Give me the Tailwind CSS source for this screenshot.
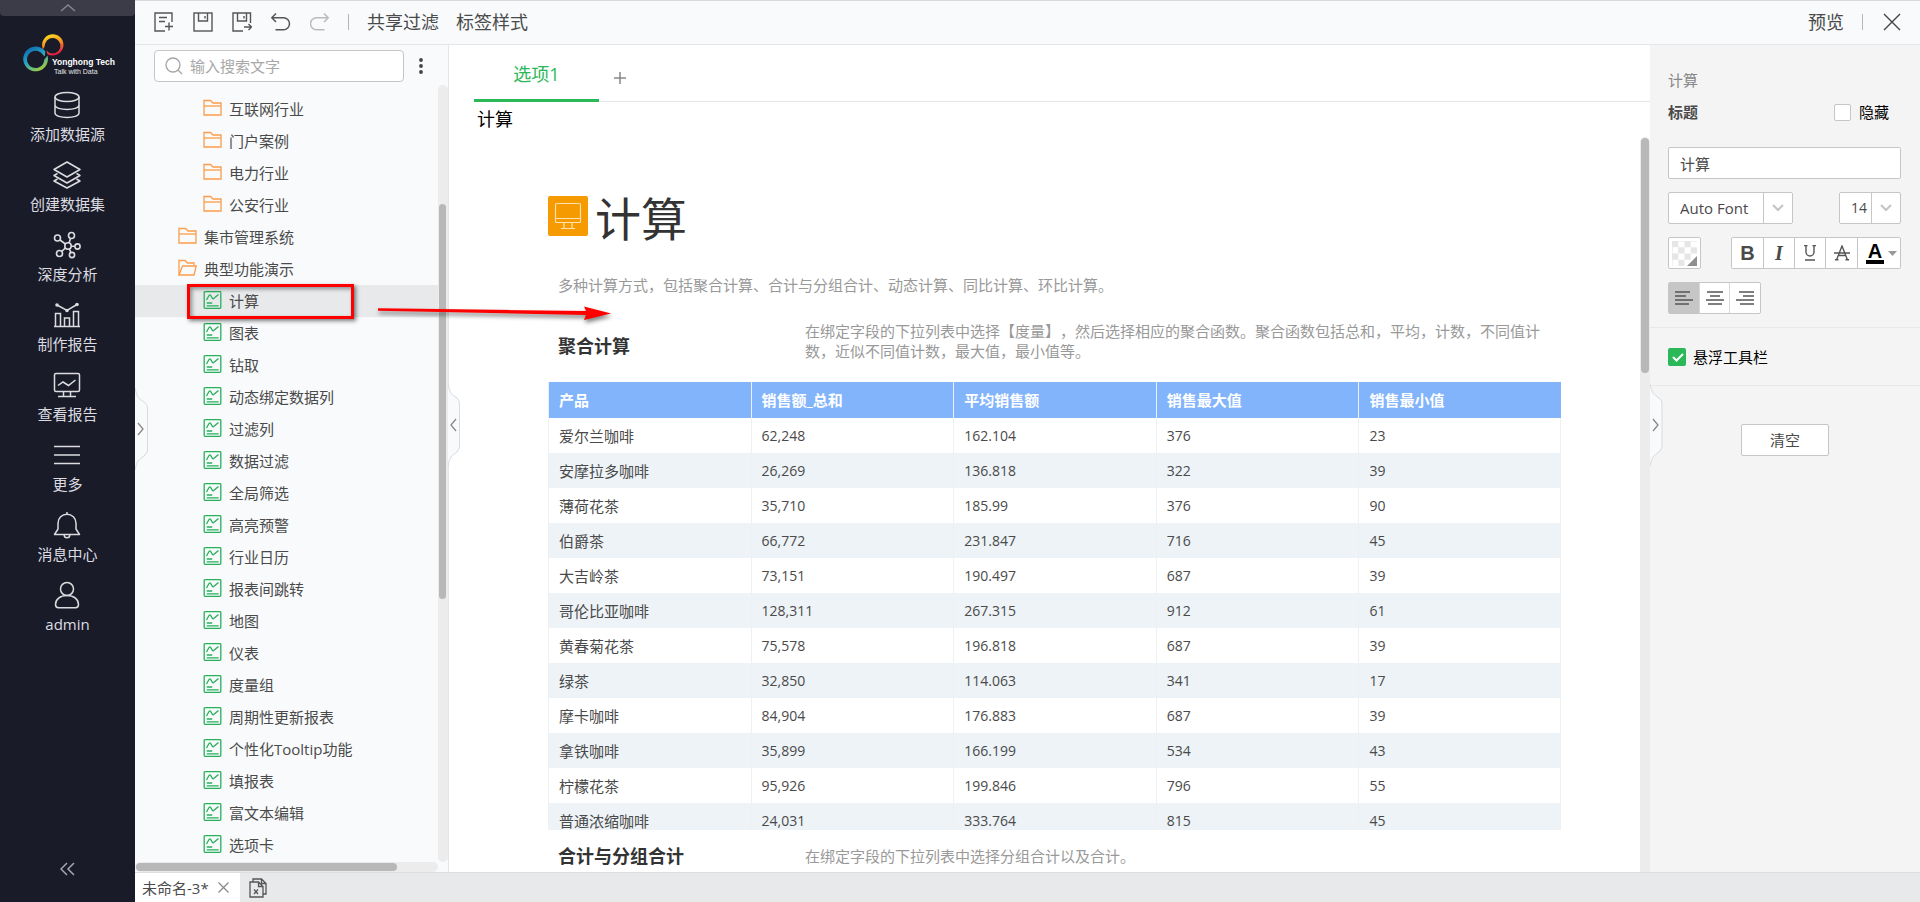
<!DOCTYPE html>
<html lang="zh-CN">
<head>
<meta charset="utf-8">
<meta name="viewport" content="width=device-width, initial-scale=1">
<title>Yonghong Tech</title>
<script src="https://cdn.jsdelivr.net/npm/@tailwindcss/browser@4"></script>
</head>
<body class="h-screen overflow-hidden bg-white font-['Open_Sans','Noto_Sans_CJK_SC',sans-serif] text-[15px] leading-5 text-[#4a4a4a] [text-spacing-trim:space-all]">
<svg class="hidden" aria-hidden="true">
  <symbol id="folder" viewBox="0 0 19 17" fill="none" stroke="#fb9d4a" stroke-width="1.3"><path d="M1 1h6.5l2.5 2.5h8V15.500H1z"/><path d="M1 6.500h17"/></symbol>
  <symbol id="folder-open" viewBox="0 0 19 17" fill="none" stroke="#fb9d4a" stroke-width="1.3"><path d="M1 15.500V1h6l2.500 2.500h6.500V6"/><path d="M1 15.500L4.500 6.500H18.200L16 15.500z"/></symbol>
  <symbol id="report" viewBox="0 0 18 18" fill="none" stroke="#27b05c" stroke-width="1.3"><rect x=".7" y=".7" width="16.600" height="16.600" rx=".8"/><path d="M3 9l2.500-4.500q.8-1.200 1.700 0l1.600 2.700q.8 1.200 1.700 0L15 3.500M3.200 12h5.500M3.200 14.800h12"/></symbol>
  <symbol id="chev" viewBox="0 0 12 8" fill="none" stroke="#c4c4c4" stroke-width="2"><path d="M1 1l5 5 5-5"/></symbol>
</svg>

<div class="flex h-full">
  <nav class="flex w-[135px] shrink-0 flex-col items-center bg-[#1a1b29] text-[#dcdce0]">
    <button aria-label="收起" class="flex h-4 w-full items-center justify-center rounded-b-sm bg-[#3b3c48]">
      <svg class="h-2 w-4" viewBox="0 0 16 8" fill="none" stroke="#85868f" stroke-width="1.500"><path d="M1 7l7-6 7 6"/></svg>
    </button>
    <svg class="mt-4 h-[44px] w-[94px]" viewBox="21 32 94 44" role="img" aria-label="Yonghong Tech">
      <defs>
        <linearGradient id="warm" x1=".2" y1="0" x2=".5" y2="1"><stop offset="0" stop-color="#fbe122"/><stop offset=".5" stop-color="#f3901e"/><stop offset="1" stop-color="#e3124b"/></linearGradient>
        <linearGradient id="cool" x1=".1" y1="0" x2=".7" y2="1"><stop offset="0" stop-color="#0a5fae"/><stop offset=".5" stop-color="#27a3c4"/><stop offset="1" stop-color="#a8cf38"/></linearGradient>
      </defs>
      <path fill="url(#warm)" fill-rule="evenodd" d="M42.200 46.500A10.700 10.700 0 1 1 47.500 54.200L46.500 50.500A7.800 7.800 0 1 0 45.200 43.500Q45 46.500 42.800 49.500z"/>
      <path fill="url(#cool)" fill-rule="evenodd" d="M45.300 51.200A12.400 12.400 0 1 0 48 59.500Q48 57 47.500 55.500Q46 57.500 44.200 59.800A8.600 8.600 0 1 1 42.500 54.300L44.800 56.500z"/>
      <text x="52" y="64.500" fill="#fff" font-size="8.500" font-weight="700" font-family="Liberation Sans, sans-serif">Yonghong Tech</text>
      <text x="54" y="73.500" fill="#e6e6e6" font-size="7" font-family="Liberation Sans, sans-serif">Talk with Data</text>
    </svg>
    <div class="mt-[15px] flex flex-col items-center gap-[17px]">
      <a href="#" class="flex flex-col items-center gap-[5px]"><svg class="size-7" viewBox="0 0 28 28" fill="none" stroke="currentColor" stroke-width="1.500"><ellipse cx="14" cy="6" rx="12" ry="4.500"/><path d="M2 6v16c0 6 24 6 24 0V6M2 14c0 6 24 6 24 0"/></svg>添加数据源</a>
      <a href="#" class="flex flex-col items-center gap-[5px]"><svg class="size-7" viewBox="0 0 28 28" fill="none" stroke="currentColor" stroke-width="1.500" stroke-linejoin="round"><path d="M14 1l13 7.500L14 16 1 8.500z"/><path d="M4.500 12.500L1 14.500 14 22l13-7.500-3.500-2M4.500 18L1 20l13 7 13-7-3.500-2"/></svg>创建数据集</a>
      <a href="#" class="flex flex-col items-center gap-[5px]"><svg class="size-7" viewBox="0 0 28 28" fill="none" stroke="currentColor" stroke-width="1.600"><circle cx="15" cy="15" r="3.200"/><circle cx="4.500" cy="7" r="3"/><circle cx="18.500" cy="4.500" r="3"/><circle cx="24.500" cy="15.500" r="2.600"/><circle cx="6.500" cy="22.500" r="3"/><circle cx="19" cy="24" r="2.600"/><path d="M7 9l5.400 4M17.500 7.300l-1.400 4.600M18.200 15.200h3.700M12.400 17l-3.600 3.400M16.300 18l1.700 3.600"/></svg>深度分析</a>
      <a href="#" class="flex flex-col items-center gap-[5px]"><svg class="size-7" viewBox="0 0 28 28" fill="none" stroke="currentColor" stroke-width="1.500"><path d="M1 25.500h26M2.500 25V12.500h5V25M11.500 25v-8h5v8M20.500 25V10.500h5V25M4 4l10 5.500 10-6"/><g fill="currentColor" stroke="none"><circle cx="4" cy="4" r="1.800"/><circle cx="14" cy="9.500" r="1.800"/><circle cx="24" cy="3.500" r="1.800"/></g></svg>制作报告</a>
      <a href="#" class="flex flex-col items-center gap-[5px]"><svg class="size-7" viewBox="0 0 28 28" fill="none" stroke="currentColor" stroke-width="1.500"><rect x="1.500" y="2.500" width="25" height="18" rx="1.500"/><path d="M5 14.500l5-3.500 5.500 3.500 7-5.500M10.500 21v4M17.500 21v4M5 25.500h18"/></svg>查看报告</a>
      <a href="#" class="flex flex-col items-center gap-[5px]"><svg class="size-7" viewBox="0 0 28 28" fill="none" stroke="currentColor" stroke-width="1.600"><path d="M1 5.500h26M1 14h26M1 22.500h26"/></svg>更多</a>
      <a href="#" class="flex flex-col items-center gap-[5px]"><svg class="size-7" viewBox="0 0 28 28" fill="none" stroke="currentColor" stroke-width="1.500" stroke-linejoin="round"><path d="M14 3.200c-5 0-9 4-9 9V18l-3.500 5.500h25L23 18v-5.800c0-5-4-9-9-9zM14 3.200V1M11.200 24a2.800 2.800 0 0 0 5.600 0"/></svg>消息中心</a>
      <a href="#" class="flex flex-col items-center gap-[5px]"><svg class="size-7" viewBox="0 0 28 28" fill="none" stroke="currentColor" stroke-width="1.500"><circle cx="14" cy="8" r="6.500"/><path d="M14 14.500c-7 0-11.500 4-11.500 9 0 2 1 3.200 3 3.200h17c2 0 3-1.200 3-3.200 0-5-4.500-9-11.500-9z"/></svg>admin</a>
    </div>
    <button aria-label="折叠菜单" class="mt-auto mb-[26px]"><svg class="h-[14px] w-[15px]" viewBox="0 0 15 14" fill="none" stroke="#a5a6ae" stroke-width="1.500"><path d="M7 1L1 7l6 6M14 1L8 7l6 6"/></svg></button>
  </nav>

  <div class="relative flex min-w-0 flex-1 flex-col">
    <header class="flex h-[45px] shrink-0 items-center border-t border-b border-t-[#d8dbde] border-b-[#e3e7eb] bg-[#f8fafc] pr-[19px] pb-px pl-[19px] text-lg">
      <div class="flex gap-[19px]">
        <button aria-label="新建"><svg class="size-5" viewBox="0 0 20 20" fill="none" stroke="#555" stroke-width="1.400"><path d="M18 10V1H1v18h10M5 5.500h8M5 9.500h6M11 14.500h8M15 10.500v8"/></svg></button>
        <button aria-label="保存"><svg class="size-5" viewBox="0 0 20 20" fill="none" stroke="#555" stroke-width="1.400"><rect x="1" y="1" width="18" height="18"/><path d="M5.500 1v8h9V1M12 4v2.500"/></svg></button>
        <button aria-label="另存为"><svg class="size-5" viewBox="0 0 20 20" fill="none" stroke="#555" stroke-width="1.400"><path d="M18.500 11V1H1v18h10M5.500 1v8h9V1M12 4v2.500M12 15h7M16.500 12l3 3-3 3"/></svg></button>
        <button aria-label="撤销"><svg class="size-5" viewBox="0 0 20 20" fill="none" stroke="#555" stroke-width="1.500"><path d="M5 1.500L.8 5.700 5 10M.8 5.700H12.500a6 6 0 0 1 0 12H4.500"/></svg></button>
        <button aria-label="重做"><svg class="size-5" viewBox="0 0 20 20" fill="none" stroke="#bbb" stroke-width="1.500"><path d="M14 1.500L18.200 5.700 14 10M18.200 5.700H6.500a6 6 0 0 0 0 12h8"/></svg></button>
      </div>
      <span class="mx-[18px] h-4 w-px bg-[#b5b5b5]"></span>
      <button class="mr-[17px]">共享过滤</button>
      <button>标签样式</button>
      <button class="ml-auto">预览</button>
      <span class="mx-[18px] h-4 w-px bg-[#b5b5b5]"></span>
      <button aria-label="关闭"><svg class="ml-[2px] size-[18px]" viewBox="0 0 18 18" stroke="#444" stroke-width="1.400"><path d="M1 1l16 16M17 1L1 17"/></svg></button>
    </header>

    <div class="flex min-h-0 flex-1">
      <aside class="relative flex w-[314px] shrink-0 flex-col border-r border-[#e3e7ec] bg-[#f8fafc]">
        <div class="flex h-10 shrink-0 items-start pt-[5px] pl-[19px]">
          <label class="flex h-8 w-[250px] items-center gap-[7px] rounded-sm border border-[#c6c6c6] bg-white pl-[10px]">
            <svg class="size-[18px] shrink-0" viewBox="0 0 18 18" fill="none" stroke="#a5a5a5" stroke-width="1.300"><circle cx="8" cy="8" r="7"/><path d="M13 13l4 4"/></svg>
            <input type="text" aria-label="搜索" placeholder="输入搜索文字" class="w-full min-w-0 outline-none placeholder:text-[#a8a8a8]">
          </label>
          <button aria-label="更多选项" class="ml-[13px] flex h-8 w-2 items-center justify-center"><svg class="h-4 w-1" viewBox="0 0 4 16" fill="#444"><circle cx="2" cy="2" r="1.900"/><circle cx="2" cy="8" r="1.900"/><circle cx="2" cy="14" r="1.900"/></svg></button>
        </div>
        <div class="flex min-h-0 flex-1">
          <ul class="min-w-0 flex-1 overflow-hidden pt-2 [&_a]:flex [&_a]:h-8 [&_a]:items-center [&_a]:gap-[7px] [&_svg]:-mt-[3px] [&_svg]:w-[19px] [&_svg]:h-[18px]">
            <li><a href="#" class="pl-[68px]"><svg><use href="#folder"/></svg>互联网行业</a></li>
            <li><a href="#" class="pl-[68px]"><svg><use href="#folder"/></svg>门户案例</a></li>
            <li><a href="#" class="pl-[68px]"><svg><use href="#folder"/></svg>电力行业</a></li>
            <li><a href="#" class="pl-[68px]"><svg><use href="#folder"/></svg>公安行业</a></li>
            <li><a href="#" class="pl-[43px]"><svg><use href="#folder"/></svg>集市管理系统</a></li>
            <li><a href="#" class="pl-[43px]"><svg><use href="#folder-open"/></svg>典型功能演示</a></li>
            <li><a href="#" class="bg-[#e7e9ea] pl-[68px]"><svg><use href="#report"/></svg>计算</a></li>
            <li><a href="#" class="pl-[68px]"><svg><use href="#report"/></svg>图表</a></li>
            <li><a href="#" class="pl-[68px]"><svg><use href="#report"/></svg>钻取</a></li>
            <li><a href="#" class="pl-[68px]"><svg><use href="#report"/></svg>动态绑定数据列</a></li>
            <li><a href="#" class="pl-[68px]"><svg><use href="#report"/></svg>过滤列</a></li>
            <li><a href="#" class="pl-[68px]"><svg><use href="#report"/></svg>数据过滤</a></li>
            <li><a href="#" class="pl-[68px]"><svg><use href="#report"/></svg>全局筛选</a></li>
            <li><a href="#" class="pl-[68px]"><svg><use href="#report"/></svg>高亮预警</a></li>
            <li><a href="#" class="pl-[68px]"><svg><use href="#report"/></svg>行业日历</a></li>
            <li><a href="#" class="pl-[68px]"><svg><use href="#report"/></svg>报表间跳转</a></li>
            <li><a href="#" class="pl-[68px]"><svg><use href="#report"/></svg>地图</a></li>
            <li><a href="#" class="pl-[68px]"><svg><use href="#report"/></svg>仪表</a></li>
            <li><a href="#" class="pl-[68px]"><svg><use href="#report"/></svg>度量组</a></li>
            <li><a href="#" class="pl-[68px]"><svg><use href="#report"/></svg>周期性更新报表</a></li>
            <li><a href="#" class="pl-[68px]"><svg><use href="#report"/></svg>个性化Tooltip功能</a></li>
            <li><a href="#" class="pl-[68px]"><svg><use href="#report"/></svg>填报表</a></li>
            <li><a href="#" class="pl-[68px]"><svg><use href="#report"/></svg>富文本编辑</a></li>
            <li><a href="#" class="pl-[68px]"><svg><use href="#report"/></svg>选项卡</a></li>
          </ul>
          <div class="w-[10px] rounded-full bg-[#ececec] pt-[119px] pl-px"><div class="h-[395px] w-[7px] rounded-full bg-[#b8b8b8]"></div></div>
        </div>
        <div class="mr-[10px] h-[10px] shrink-0 rounded-full bg-[#ececec] pt-px pl-px"><div class="h-2 w-[261px] rounded-full bg-[#b8b8b8]"></div></div>

        <button aria-label="展开菜单" class="absolute top-[342px] left-0"><svg class="h-[84px] w-[14px]" viewBox="0 0 14 84" fill="none"><path d="M0 1C2 10 3 11 9 15Q12.500 17 12.500 21V63Q12.500 66 9 69C3 73 2 74 0 83" fill="#f8fafc" stroke="#d5dbe1"/><path d="M3 36l5 6-5 6" stroke="#888" stroke-width="1.300"/></svg></button>
        <button aria-label="折叠目录" class="absolute top-[338px] left-[313px] z-10"><svg class="h-[84px] w-[14px]" viewBox="0 0 14 84" fill="none"><path d="M0 1C2 10 3 11 9 15Q11.500 17 11.500 21V63Q11.500 66 9 69C3 73 2 74 0 83" fill="#f8fafc" stroke="#d5dbe1"/><path d="M8 36l-5 6 5 6" stroke="#888" stroke-width="1.300"/></svg></button>
      </aside>

      <main class="flex min-w-0 flex-1 flex-col">
        <div class="ml-[25px] flex h-[57px] shrink-0 items-stretch border-b border-[#e5e7e9]">
          <button class="-mb-px w-[125px] border-b-3 border-[#2bb858] pt-1 text-center text-lg text-[#2bb858]">选项1</button>
          <button aria-label="新增标签" class="ml-[15px] pt-[9px]"><svg class="size-3" viewBox="0 0 12 12" stroke="#888" stroke-width="1.500"><path d="M6 0v12M0 6h12"/></svg></button>
        </div>
        <div class="flex h-[35px] shrink-0 items-center pb-[2px] pl-7 text-lg text-black">计算</div>
        <div class="flex min-h-0 flex-1">
          <section class="min-w-0 flex-1 overflow-hidden pt-[59px] pr-[79px] pl-[99px]">
            <div class="flex h-10 items-center gap-[7px]">
              <svg class="size-10 shrink-0" viewBox="0 0 40 40" fill="none" stroke="#ffe2ae" stroke-width="1.200"><rect width="40" height="40" rx="2" fill="#f59a00" stroke="none"/><rect x="7.500" y="7.500" width="25" height="19" rx="1"/><path d="M7.500 22.500h25M16 27v5M24 27v5M13 32.500h14"/></svg>
              <h1 class="pt-1 text-[46px] leading-10 text-[#333]">计算</h1>
            </div>
            <p class="mt-[39px] pl-[10px] text-[#999]">多种计算方式，包括聚合计算、合计与分组合计、动态计算、同比计算、环比计算。</p>
            <div class="mt-[26px] flex items-center pr-[11px] pl-[10px]">
              <h2 class="w-[247px] shrink-0 pt-[10px] text-lg leading-5 font-bold text-[#333]">聚合计算</h2>
              <p class="text-[#999]">在绑定字段的下拉列表中选择【度量】，然后选择相应的聚合函数。聚合函数包括总和，平均，计数，不同值计数，近似不同值计数，最大值，最小值等。</p>
            </div>
            <div class="mt-[21px] h-[448px] overflow-hidden">
              <table class="w-full table-fixed border-separate border-spacing-0 text-left [&_th]:h-9 [&_th]:border-l [&_th]:border-[#e9f1fb] [&_th]:pl-[10px] [&_td]:h-[35px] [&_td]:border-l [&_td]:border-[#eef0f2] [&_td]:pl-[10px] [&_td:last-child]:border-r [&_tbody_tr:nth-child(even)]:bg-[#edf3f7] [&_td:not(:first-child)]:text-sm">
                <thead><tr class="bg-[#82b4fb] font-bold text-white"><th>产品</th><th>销售额_总和</th><th>平均销售额</th><th>销售最大值</th><th>销售最小值</th></tr></thead>
                <tbody>
                  <tr><td>爱尔兰咖啡</td><td>62,248</td><td>162.104</td><td>376</td><td>23</td></tr>
                  <tr><td>安摩拉多咖啡</td><td>26,269</td><td>136.818</td><td>322</td><td>39</td></tr>
                  <tr><td>薄荷花茶</td><td>35,710</td><td>185.99</td><td>376</td><td>90</td></tr>
                  <tr><td>伯爵茶</td><td>66,772</td><td>231.847</td><td>716</td><td>45</td></tr>
                  <tr><td>大吉岭茶</td><td>73,151</td><td>190.497</td><td>687</td><td>39</td></tr>
                  <tr><td>哥伦比亚咖啡</td><td>128,311</td><td>267.315</td><td>912</td><td>61</td></tr>
                  <tr><td>黄春菊花茶</td><td>75,578</td><td>196.818</td><td>687</td><td>39</td></tr>
                  <tr><td>绿茶</td><td>32,850</td><td>114.063</td><td>341</td><td>17</td></tr>
                  <tr><td>摩卡咖啡</td><td>84,904</td><td>176.883</td><td>687</td><td>39</td></tr>
                  <tr><td>拿铁咖啡</td><td>35,899</td><td>166.199</td><td>534</td><td>43</td></tr>
                  <tr><td>柠檬花茶</td><td>95,926</td><td>199.846</td><td>796</td><td>55</td></tr>
                  <tr><td>普通浓缩咖啡</td><td>24,031</td><td>333.764</td><td>815</td><td>45</td></tr>
                </tbody>
              </table>
            </div>
            <div class="mt-4 flex items-center pl-[10px]">
              <h2 class="w-[247px] shrink-0 text-lg leading-5 font-bold text-[#333]">合计与分组合计</h2>
              <p class="text-[#999]">在绑定字段的下拉列表中选择分组合计以及合计。</p>
            </div>
          </section>
          <div class="w-[10px] rounded-t-full bg-[#ececec] pt-px pl-px"><div class="h-[235px] w-2 rounded-full bg-[#b8b8b8]"></div></div>
        </div>
      </main>

      <aside class="relative w-[270px] shrink-0 bg-[#f4f4f4]">
        <div class="flex flex-col border-b border-[#e6e8ea] pt-[25px] pr-[19px] pb-[13px] pl-[18px]">
          <div class="text-[#888]">计算</div>
          <div class="mt-3 flex h-5 items-center justify-between">
            <span class="font-bold">标题</span>
            <label class="flex items-center gap-2 pr-3 text-black"><input type="checkbox" class="size-[17px] appearance-none rounded-xs border border-[#c6c6c6] bg-white">隐藏</label>
          </div>
          <input type="text" aria-label="标题" value="计算" class="mt-[25px] h-8 w-full rounded-xs border border-[#c6c6c6] bg-white px-[11px]">
          <div class="mt-[13px] flex justify-between">
            <div class="relative w-[125px]">
              <select aria-label="字体" class="h-8 w-full appearance-none rounded-xs border border-[#c6c6c6] bg-white pl-[11px]"><option>Auto Font</option></select>
              <span class="pointer-events-none absolute top-px right-px flex h-[30px] w-[29px] items-center justify-center border-l border-[#c6c6c6]"><svg class="h-2 w-3"><use href="#chev"/></svg></span>
            </div>
            <div class="relative w-[62px]">
              <select aria-label="字号" class="h-8 w-full appearance-none rounded-xs border border-[#c6c6c6] bg-white pl-[11px] text-sm"><option>14</option></select>
              <span class="pointer-events-none absolute top-px right-px flex h-[30px] w-[29px] items-center justify-center border-l border-[#c6c6c6]"><svg class="h-2 w-3"><use href="#chev"/></svg></span>
            </div>
          </div>
          <div class="mt-[13px] flex justify-between">
            <button aria-label="背景色" class="flex h-8 w-[33px] items-center justify-center rounded-xs border border-[#c6c6c6] bg-white">
              <svg class="size-[25px]" viewBox="0 0 25 25"><path fill="#e6e6e6" d="M0 0h6.250v6.250H0zM12.500 0h6.250v6.250H12.500zM6.250 6.250h6.250v6.250H6.250zM18.750 6.250H25v6.250h-6.250zM0 12.500h6.250v6.250H0zM12.500 12.500h6.250v6.250H12.500zM6.250 18.750h6.250V25H6.250zM0 0h25v.6H0zM0 0h.6v25H0z"/><path fill="#8f8f8f" d="M25 15v10H15z"/></svg>
            </button>
            <div class="flex h-8 divide-x divide-[#c6c6c6] rounded-xs border border-[#c6c6c6] bg-white font-['Liberation_Sans','Noto_Sans_CJK_SC',sans-serif] text-xl">
              <button aria-label="粗体" class="w-8 font-bold">B</button>
              <button aria-label="斜体" class="w-[31px] font-['Liberation_Serif',serif] font-bold italic">I</button>
              <button aria-label="下划线" class="flex w-[31px] items-center justify-center"><svg class="h-4 w-3" viewBox="0 0 12 16" fill="none" stroke="#555" stroke-width="1.400"><path d="M2 0v7a4 4 0 0 0 8 0V0M0 .5h3.500M8.500 .5H12M1 15h10"/></svg></button>
              <button aria-label="删除线" class="flex w-8 items-center justify-center"><svg class="size-4" viewBox="0 0 16 16" fill="none" stroke="#555" stroke-width="1.400"><path d="M2.500 15L8 1l5.500 14M5 10.500h6M1 14.800h3.500M11.500 14.800H15M0 8h16"/></svg></button>
              <button aria-label="字体颜色" class="flex w-[42px] items-center justify-center gap-1 pl-[5px] text-black"><span class="w-[18px] border-b-4 border-black leading-[18px] font-bold">A</span><svg class="h-[5px] w-[9px]" viewBox="0 0 9 5" fill="#999"><path d="M0 0h9L4.500 5z"/></svg></button>
            </div>
          </div>
          <div class="mt-[13px] flex h-8 w-[93px] divide-x divide-[#d8d8d8] rounded-xs border border-[#c6c6c6] bg-white">
            <button aria-label="左对齐" class="flex flex-1 items-center justify-center bg-[#c6c6c6]"><svg class="h-[14px] w-[18px]" viewBox="0 0 18 14" stroke="#555" stroke-width="1.300"><path d="M0 1h15M0 5h11M0 9h18M0 13h14"/></svg></button>
            <button aria-label="居中对齐" class="flex flex-1 items-center justify-center"><svg class="h-[14px] w-[18px]" viewBox="0 0 18 14" stroke="#555" stroke-width="1.300"><path d="M1 1h16M4 5h10M0 9h18M2 13h14"/></svg></button>
            <button aria-label="右对齐" class="flex flex-1 items-center justify-center"><svg class="h-[14px] w-[18px]" viewBox="0 0 18 14" stroke="#555" stroke-width="1.300"><path d="M3 1h15M7 5h11M0 9h18M4 13h14"/></svg></button>
          </div>
        </div>
        <div class="flex h-[58px] items-center border-b border-[#e6e8ea] pt-px pl-[18px]">
          <label class="flex items-center gap-[7px] text-black">
            <span class="relative flex size-[18px]">
              <input type="checkbox" checked class="size-[18px] appearance-none rounded-xs bg-[#2bb858]">
              <svg class="pointer-events-none absolute inset-0 size-[18px]" viewBox="0 0 18 18" fill="none" stroke="#fff" stroke-width="2"><path d="M5 9l3.500 3.500L15 6"/></svg>
            </span>悬浮工具栏</label>
        </div>
        <div class="flex justify-center pt-[38px]"><button class="h-8 w-[88px] rounded-xs border border-[#c6c6c6] bg-white">清空</button></div>
        <button aria-label="折叠属性面板" class="absolute top-[338px] left-0"><svg class="h-[84px] w-[14px]" viewBox="0 0 14 84" fill="none"><path d="M0 1C2 10 3 11 9 15Q12 17 12 21V63Q12 66 9 69C3 73 2 74 0 83" fill="#f8fafc" stroke="#d5dbe1"/><path d="M3 36l5 6-5 6" stroke="#888" stroke-width="1.300"/></svg></button>
      </aside>
    </div>

    <footer class="flex h-[30px] shrink-0 items-stretch border-t border-[#dcdee0] bg-[#e7e9eb]">
      <div class="flex w-[105px] items-center gap-[9px] bg-white pl-[7px]">
        <span>未命名-3*</span>
        <button aria-label="关闭标签"><svg class="size-[11px]" viewBox="0 0 11 11" stroke="#888" stroke-width="1.200"><path d="M.5.5l10 10M10.500.5l-10 10"/></svg></button>
      </div>
      <button aria-label="关闭全部" class="ml-[9px]"><svg class="h-5 w-[18px]" viewBox="0 0 18 20" fill="none" stroke="#555" stroke-width="1.300"><path d="M4 4V1h8.500L17 5.500V16h-3M12.500 1v4.500H17"/><path d="M1 4h8.500L14 8.500V19H1zM9.500 4v4.500H14M5 11.500l4 4.500M9 11.500L5 16"/></svg></button>
    </footer>

    <div class="pointer-events-none absolute top-[284px] left-[52px] z-20 h-[35px] w-[167px] border-3 border-[#fe0000] shadow-[2px_2px_4px_rgba(0,0,0,0.5),inset_2px_2px_4px_rgba(0,0,0,0.4)]"></div>
    <svg class="pointer-events-none absolute top-[300px] left-[240px] z-20 h-8 w-[245px] drop-shadow-[1px_3px_2px_rgba(0,0,0,0.5)]" viewBox="375 300 245 32"><path fill="#fe0000" d="M378 308.300L586 311l-2-4.500 27 7-27 6.500 2-5L378 310.700z"/></svg>
  </div>
</div>
</body>
</html>
